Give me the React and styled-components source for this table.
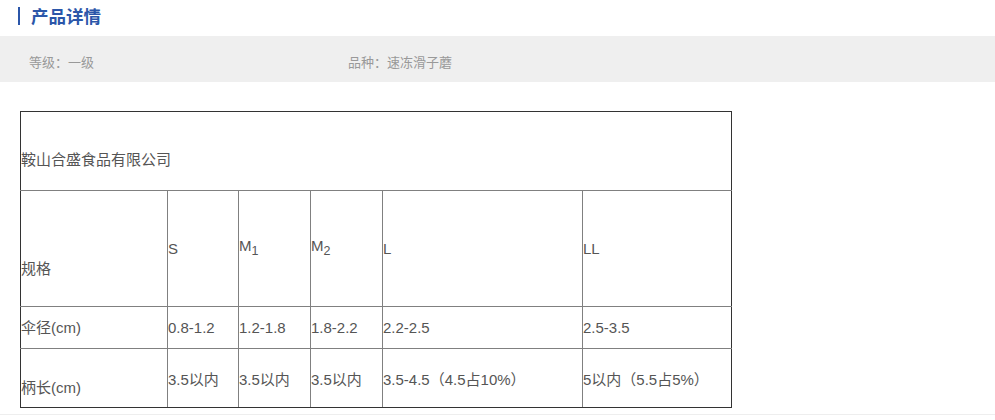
import React from "react";
import styled, { createGlobalStyle } from "styled-components";

const GlobalStyle = createGlobalStyle`
  body {
    margin: 0;
    background: #fff;
    font-family: "Liberation Sans", "Noto Sans CJK SC", sans-serif;
  }
`;

const Page = styled.div`
  width: 995px;
  height: 420px;
  overflow: hidden;
`;

const TitleBar = styled.div`
  height: 36px;
  display: flex;
  align-items: flex-start;
  padding: 6px 0 0 18px;
  box-sizing: border-box;
`;

const Accent = styled.span`
  width: 2px;
  height: 18px;
  margin-top: 1px;
  background: #2b56a9;
`;

const Title = styled.h2`
  margin: 0 0 0 11px;
  font-family: "Noto Sans CJK SC", sans-serif;
  font-size: 17.5px;
  line-height: 20px;
  font-weight: 700;
  color: #2b56a9;
`;

const InfoBand = styled.div`
  height: 46px;
  background: #efefef;
  display: grid;
  grid-template-columns: 319px 1fr;
  align-items: center;
  padding: 4px 0 0 29px;
  box-sizing: border-box;
`;

const InfoItem = styled.span`
  font-size: 13px;
  color: #999;
`;

const Table = styled.table`
  margin: 29px 0 0 20px;
  width: 712px;
  table-layout: fixed;
  border-collapse: collapse;
  font-size: 15px;
  color: #555;

  tr:first-child td {
    border-top-color: #333;
  }
  tr:last-child td {
    border-bottom-color: #333;
  }
`;

const Row = styled.tr`
  height: ${(p) => p.$h}px;
`;

const Cell = styled.td`
  border: 1px solid #808080;
  padding: ${(p) => p.$top || 0}px 0 0 0;
  vertical-align: middle;
  text-align: left;
  white-space: nowrap;
  line-height: 18px;

  &:first-child {
    border-left-color: #333;
  }
  &:last-child {
    border-right-color: #333;
  }
`;

const Divider = styled.div`
  margin-top: 6px;
  height: 1px;
  background: #eee;
`;

const rows = [
  { label: "伞径(cm)", h: 42, top: 0, values: ["0.8-1.2", "1.2-1.8", "1.8-2.2", "2.2-2.5", "2.5-3.5"] },
  { label: "柄长(cm)", h: 59, top: 20, valueTop: 4, values: ["3.5以内", "3.5以内", "3.5以内", "3.5-4.5（4.5占10%）", "5以内（5.5占5%）"] },
];

export default function App() {
  return (
    <Page>
      <GlobalStyle />
      <TitleBar>
        <Accent />
        <Title>产品详情</Title>
      </TitleBar>
      <InfoBand>
        <InfoItem>等级：一级</InfoItem>
        <InfoItem>品种：速冻滑子蘑</InfoItem>
      </InfoBand>
      <Table>
        <colgroup>
          <col style={{ width: 147 }} />
          <col style={{ width: 71 }} />
          <col style={{ width: 72 }} />
          <col style={{ width: 72 }} />
          <col style={{ width: 200 }} />
          <col style={{ width: 149 }} />
        </colgroup>
        <tbody>
          <Row $h={79}>
            <Cell colSpan={6} $top={18}>鞍山合盛食品有限公司</Cell>
          </Row>
          <Row $h={116}>
            <Cell $top={40}>规格</Cell>
            <Cell>S</Cell>
            <Cell>M<sub>1</sub></Cell>
            <Cell>M<sub>2</sub></Cell>
            <Cell>L</Cell>
            <Cell>LL</Cell>
          </Row>
          {rows.map((r) => (
            <Row key={r.label} $h={r.h}>
              <Cell $top={r.top}>{r.label}</Cell>
              {r.values.map((v, i) => (
                <Cell key={i} $top={r.valueTop}>{v}</Cell>
              ))}
            </Row>
          ))}
        </tbody>
      </Table>
      <Divider />
    </Page>
  );
}
